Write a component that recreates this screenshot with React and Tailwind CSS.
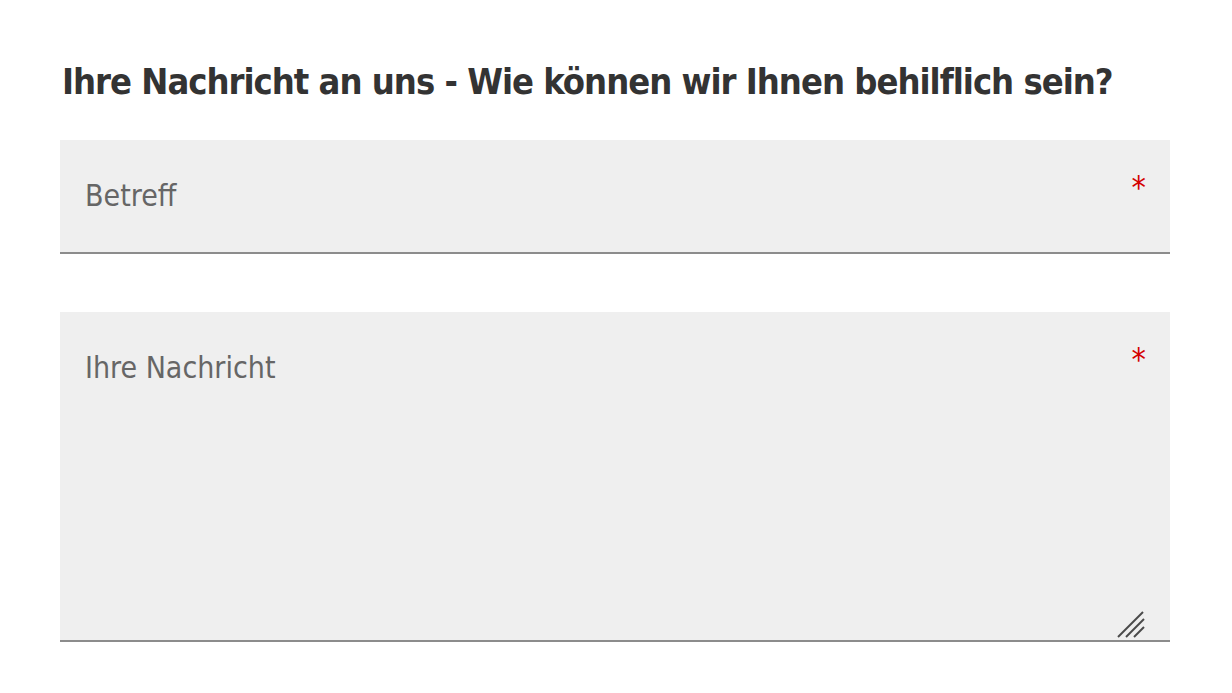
const App = () => {
    return (
        <div className="min-h-[693px] bg-white px-[60px] pt-[58px]" style={{ fontFamily: '"DejaVu Sans Condensed", "Liberation Sans Narrow", Roboto, sans-serif' }}>
            <h2 className="whitespace-nowrap text-[36px] font-bold leading-[48px] tracking-[-1px] text-[#333333] pl-[2px]">
                Ihre Nachricht an uns - Wie können wir Ihnen behilflich sein?
            </h2>
            <div className="mt-[34px] relative h-[114px] w-[1110px] bg-[#efefef] border-b-2 border-[#8c8c8c]">
                <span className="absolute left-[25px] top-[36px] text-[30px] leading-[40px] text-[#666666]">Betreff</span>
                <span className="absolute right-[24px] top-[32px] text-[32px] leading-[30px] text-[#d40000]">*</span>
            </div>
            <div className="mt-[58px] relative h-[330px] w-[1110px] bg-[#efefef] border-b-2 border-[#8c8c8c]">
                <span className="absolute left-[25px] top-[36px] text-[30px] leading-[40px] text-[#666666]">Ihre Nachricht</span>
                <span className="absolute right-[24px] top-[32px] text-[32px] leading-[30px] text-[#d40000]">*</span>
                <svg className="absolute right-[24px] bottom-[2px]" width="30" height="28" viewBox="0 0 30 28">
                    <g stroke="#4a4a4a" strokeWidth="2">
                        <line x1="2" y1="27" x2="27" y2="2" />
                        <line x1="10" y1="27" x2="28" y2="9" />
                        <line x1="18" y1="27" x2="28" y2="17" />
                    </g>
                </svg>
            </div>
        </div>
    );
};

export default App;
